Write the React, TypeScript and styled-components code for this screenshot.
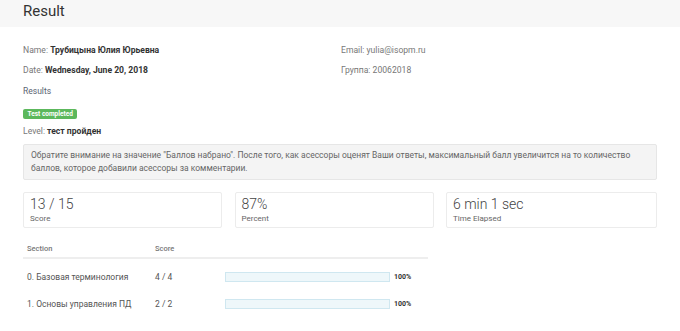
import React from "react";
import styled, { createGlobalStyle } from "styled-components";

const Global = createGlobalStyle`
  html, body { margin: 0; padding: 0; background: #fff; }
  body { font-family: Roboto, "Noto Sans", sans-serif; color: #333; }
`;

const Header = styled.div`
  background: #f7f7f7;
  height: 27px;
  padding: 0 23px;
  display: flex;
  align-items: flex-end;
`;

const Title = styled.h1`
  margin: 0 0 7px;
  font-size: 15px;
  font-weight: 400;
  color: #333;
  line-height: 17px;
`;

const Body = styled.div`
  padding: 18px 23px 0;
`;

const InfoGrid = styled.div`
  display: grid;
  grid-template-columns: 318px 1fr;
  row-gap: 9px;
`;

const InfoItem = styled.div`
  font-size: 8.6px;
  line-height: 11px;
  color: #777;
  b { color: #333; font-weight: 700; }
`;

const LinkText = styled.div`
  margin-top: 10px;
  font-size: 8.5px;
  line-height: 11px;
  color: #5a6470;
`;

const Badge = styled.div`
  width: fit-content;
  margin-top: 12px;
  background: #5cb85c;
  color: #fff;
  font-size: 6.5px;
  font-weight: 700;
  line-height: 10px;
  padding: 0 4.5px;
  border-radius: 2px;
`;

const Level = styled.div`
  margin-top: 7px;
  font-size: 8.6px;
  line-height: 11px;
  color: #777;
  b { color: #333; font-weight: 700; }
`;

const Notice = styled.div`
  margin-top: 7px;
  background: #f4f4f4;
  border: 1px solid #e6e6e6;
  border-radius: 2px;
  padding: 4px 7px;
  font-size: 8.5px;
  line-height: 13px;
  color: #666;
`;

const Stats = styled.div`
  display: grid;
  grid-template-columns: 199px 199px 1fr;
  column-gap: 12.5px;
  margin-top: 12px;
`;

const Card = styled.div`
  border: 1px solid #ececec;
  border-radius: 2px;
  padding: 3px 6px 0;
  height: 36px;
  box-sizing: border-box;
`;

const Value = styled.div`
  font-size: 14px;
  line-height: 17px;
  color: #444;
  font-weight: 300;
`;

const Label = styled.div`
  font-size: 8px;
  line-height: 11px;
  color: #666;
`;

const Table = styled.div`
  width: 405px;
  margin-top: 11px;
`;

const HeadRow = styled.div`
  display: grid;
  grid-template-columns: 128px 70px;
  align-items: center;
  height: 20px;
  padding-left: 4px;
  border-bottom: 2px solid #eeeeee;
  box-sizing: border-box;
  font-size: 7.5px;
  font-weight: 500;
  color: #777;
`;

const Rows = styled.div`
  padding-top: 4px;
`;

const Row = styled.div`
  display: grid;
  grid-template-columns: 128px 70px 167px 1fr;
  align-items: center;
  height: 27px;
  padding-left: 4px;
  font-size: 8.5px;
  color: #555;
`;

const Bar = styled.div`
  height: 10px;
  background: #eef7fa;
  border: 1px solid #cfe7f0;
  box-sizing: border-box;
  margin-right: 2px;
`;

const Pct = styled.span`
  font-size: 7px;
  font-weight: 700;
  color: #333;
  padding-left: 2px;
`;

const sections = [
  { name: "0. Базовая терминология", score: "4 / 4", pct: 100 },
  { name: "1. Основы управления ПД", score: "2 / 2", pct: 100 },
];

export default function App() {
  return (
    <>
      <Global />
      <Header>
        <Title>Result</Title>
      </Header>
      <Body>
        <InfoGrid>
          <InfoItem>
            Name: <b>Трубицына Юлия Юрьевна</b>
          </InfoItem>
          <InfoItem>Email: yulia@isopm.ru</InfoItem>
          <InfoItem>
            Date: <b>Wednesday, June 20, 2018</b>
          </InfoItem>
          <InfoItem>Группа: 20062018</InfoItem>
        </InfoGrid>
        <LinkText>Results</LinkText>
        <Badge>Test completed</Badge>
        <Level>
          Level: <b>тест пройден</b>
        </Level>
        <Notice>
          Обратите внимание на значение "Баллов набрано". После того, как асессоры оценят Ваши ответы,
          максимальный балл увеличится на то количество баллов, которое добавили асессоры за комментарии.
        </Notice>
        <Stats>
          <Card>
            <Value>13 / 15</Value>
            <Label>Score</Label>
          </Card>
          <Card>
            <Value>87%</Value>
            <Label>Percent</Label>
          </Card>
          <Card>
            <Value>6 min 1 sec</Value>
            <Label>Time Elapsed</Label>
          </Card>
        </Stats>
        <Table>
          <HeadRow>
            <span>Section</span>
            <span>Score</span>
          </HeadRow>
          <Rows>
            {sections.map((s) => (
              <Row key={s.name}>
                <span>{s.name}</span>
                <span>{s.score}</span>
                <Bar>
                  <div style={{ width: `${s.pct}%` }} />
                </Bar>
                <Pct>{s.pct}%</Pct>
              </Row>
            ))}
          </Rows>
        </Table>
      </Body>
    </>
  );
}
